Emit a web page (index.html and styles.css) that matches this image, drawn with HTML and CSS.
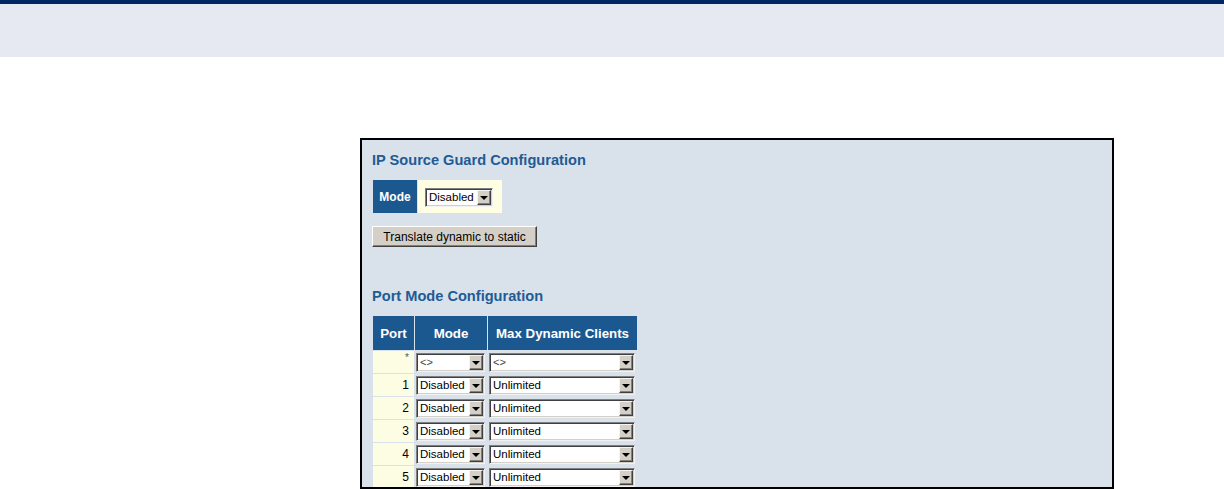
FILE: index.html
```html
<!DOCTYPE html>
<html>
<head>
<meta charset="utf-8">
<link rel="stylesheet" href="styles.css">
</head>
<body>
<div class="topbar"></div>
<div class="band"></div>
<div class="frame">
  <h2 class="title">IP Source Guard Configuration</h2>
  <table class="modetbl">
    <tr>
      <th>Mode</th>
      <td><span class="sel sel-top"><span class="val">Disabled</span><span class="arr"></span></span></td>
    </tr>
  </table>
  <button class="btn">Translate dynamic to static</button>
  <h2 class="title title2">Port Mode Configuration</h2>
  <table class="ports">
    <thead>
      <tr><th class="c-port">Port</th><th class="c-mode">Mode</th><th class="c-max">Max Dynamic Clients</th></tr>
    </thead>
    <tbody>
      <tr><td class="port star">*</td><td><span class="sel sel-mode"><span class="val small">&lt;&gt;</span><span class="arr"></span></span></td><td><span class="sel sel-max"><span class="val small">&lt;&gt;</span><span class="arr"></span></span></td></tr>
      <tr><td class="port">1</td><td><span class="sel sel-mode"><span class="val">Disabled</span><span class="arr"></span></span></td><td><span class="sel sel-max"><span class="val">Unlimited</span><span class="arr"></span></span></td></tr>
      <tr><td class="port">2</td><td><span class="sel sel-mode"><span class="val">Disabled</span><span class="arr"></span></span></td><td><span class="sel sel-max"><span class="val">Unlimited</span><span class="arr"></span></span></td></tr>
      <tr><td class="port">3</td><td><span class="sel sel-mode"><span class="val">Disabled</span><span class="arr"></span></span></td><td><span class="sel sel-max"><span class="val">Unlimited</span><span class="arr"></span></span></td></tr>
      <tr><td class="port">4</td><td><span class="sel sel-mode"><span class="val">Disabled</span><span class="arr"></span></span></td><td><span class="sel sel-max"><span class="val">Unlimited</span><span class="arr"></span></span></td></tr>
      <tr><td class="port">5</td><td><span class="sel sel-mode"><span class="val">Disabled</span><span class="arr"></span></span></td><td><span class="sel sel-max"><span class="val">Unlimited</span><span class="arr"></span></span></td></tr>
    </tbody>
  </table>
</div>
</body>
</html>
```
FILE: styles.css
```css
html, body {
  margin: 0;
  padding: 0;
  background: #fff;
  font-family: "Liberation Sans", Arial, sans-serif;
}
.topbar {
  height: 4px;
  background: #002664;
}
.band {
  height: 53px;
  background: #e6e9f2;
}
.frame {
  box-sizing: border-box;
  margin: 81px 0 0 360px;
  width: 754px;
  height: 351px;
  border: 2px solid #000;
  background: #d9e1ea;
  padding: 12px 0 0 10px;
  overflow: hidden;
}
.title {
  margin: 0;
  font-size: 14.6px;
  line-height: 16px;
  font-weight: bold;
  color: #1f5b95;
}
.title2 {
  margin-top: 41px;
}
.modetbl {
  margin-top: 11px;
  border-collapse: separate;
  border-spacing: 1px;
}
.modetbl th {
  width: 44px;
  height: 33px;
  padding: 0;
  background: #1c5890;
  color: #fff;
  font-size: 12px;
  font-weight: bold;
  text-align: center;
}
.modetbl td {
  width: 70px;
  padding: 2px 7px 0;
  background: #fffde3;
  vertical-align: middle;
}
.btn {
  display: block;
  margin-top: 12px;
  width: 165px;
  height: 21px;
  padding: 0;
  box-sizing: border-box;
  background: #d4d0c8;
  border: 1px solid;
  border-color: #fff #404040 #404040 #fff;
  box-shadow: inset -1px -1px 0 #808080;
  font-family: "Liberation Sans", Arial, sans-serif;
  font-size: 12px;
  color: #000;
}
.ports {
  margin-top: 11px;
  border-collapse: separate;
  border-spacing: 1px;
}
.ports th {
  height: 34px;
  padding: 0;
  background: #1c5890;
  color: #fff;
  font-size: 13.3px;
  font-weight: bold;
  text-align: center;
}
.c-port { width: 41px; }
.c-mode { width: 72px; }
.c-max { width: 149px; }
.ports td {
  height: 22px;
  padding: 0;
  vertical-align: middle;
}
.ports td.port {
  background: #fdfde4;
  text-align: right;
  padding-right: 5px;
  font-size: 12px;
  line-height: 14px;
  color: #000;
}
.ports td.star {
  height: 20px;
  padding-top: 2px;
  font-size: 10px;
  line-height: 10px;
  color: #555;
  vertical-align: top;
}
.sel {
  display: flex;
  box-sizing: border-box;
  height: 19px;
  background: #fff;
  border: 1px solid;
  border-color: #7f7f7f #f2f2f2 #f2f2f2 #7f7f7f;
  box-shadow: inset 1px 1px 0 #404040, inset -1px -1px 0 #d4d0c8;
  font-size: 11.5px;
  color: #000;
}
.sel-top { width: 68px; }
.sel-mode { width: 69px; margin-left: 1px; }
.sel-max { width: 146px; margin-left: 1px; }
.sel .val {
  flex: 1;
  padding-left: 3px;
  line-height: 16px;
  white-space: nowrap;
  overflow: hidden;
}
.sel .val.small {
  font-size: 11px;
  color: #444;
}
.sel .arr {
  flex: none;
  width: 14px;
  margin: 1px 1px 1px 0;
  box-sizing: border-box;
  background: #d4d0c8;
  border: 1px solid;
  border-color: #f4f4f4 #404040 #404040 #f4f4f4;
  box-shadow: inset -1px -1px 0 #808080;
  display: flex;
  align-items: center;
  justify-content: center;
}
.sel .arr::after {
  content: "";
  width: 0;
  height: 0;
  border-left: 4px solid transparent;
  border-right: 4px solid transparent;
  border-top: 4px solid #000;
  margin: 1px 1px 0 0;
}
```
